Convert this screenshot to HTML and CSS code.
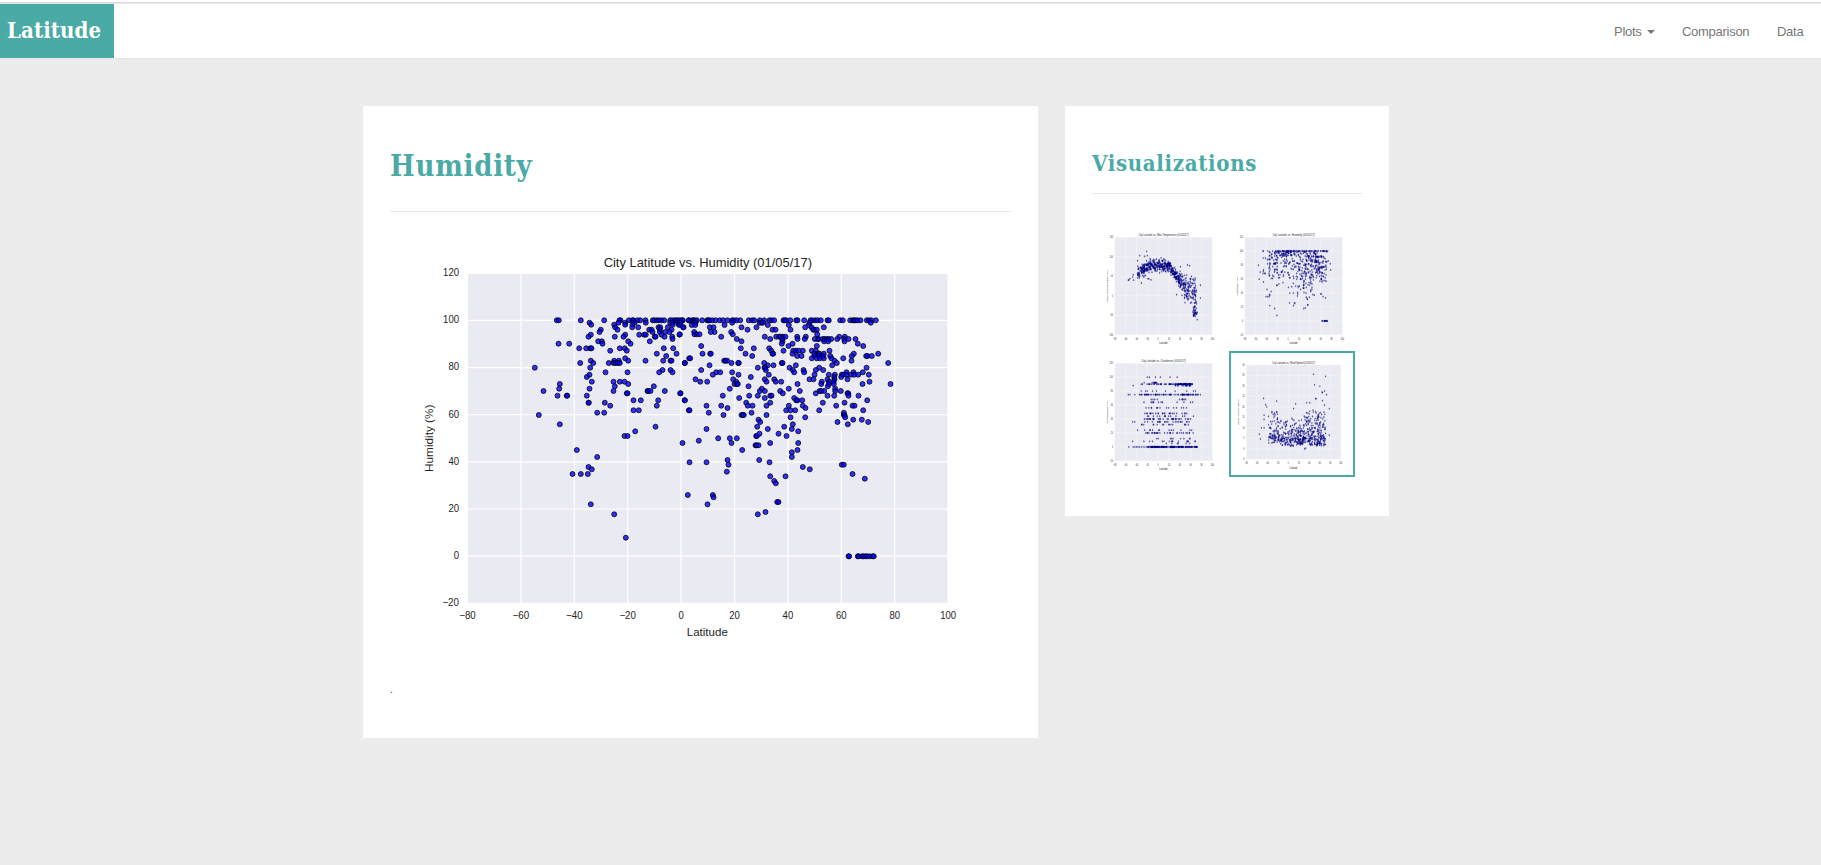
FILE: index.html
```html
<!DOCTYPE html>
<html lang="en">
<head>
<meta charset="utf-8">
<title>Latitude</title>
<link rel="stylesheet" href="styles.css">
</head>
<body>
<header class="navbar">
  <a class="brand">Latitude</a>
  <nav class="nav">
    <a class="plots">Plots <span class="caret"></span></a>
    <a class="comparison">Comparison</a>
    <a class="data">Data</a>
  </nav>
</header>
<main class="layout">
  <section class="panel main-panel">
    <h1>Humidity</h1>
    <hr>
    <svg class="chart" data-plot="humidity" viewBox="0 0 620 413"></svg>
    <p>.</p>
  </section>
  <aside class="panel side-panel">
    <h2>Visualizations</h2>
    <hr>
    <div class="thumbs">
      <svg data-plot="temperature" viewBox="0 0 620 426" preserveAspectRatio="none"></svg>
      <svg data-plot="humidity" viewBox="0 0 620 426" preserveAspectRatio="none"></svg>
      <svg data-plot="cloudiness" viewBox="0 0 620 426" preserveAspectRatio="none"></svg>
      <svg class="active" data-plot="wind" viewBox="0 0 620 426" preserveAspectRatio="none"></svg>
    </div>
  </aside>
</main>
<script src="plots.js"></script>
</body>
</html>
```
FILE: styles.css
```css
* { box-sizing: border-box; }
body { margin: 0; min-height: 865px; background: #ececec; font-family: "Liberation Sans", Arial, sans-serif; }
.navbar { height: 59px; display: flex; justify-content: space-between; background: #fff; border-bottom: 1px solid #e7e7e7; padding-top: 2px; }
.navbar::before { content: ""; position: absolute; left: 0; right: 0; top: 2px; height: 2px; background: linear-gradient(#d9dadc 50%, #e7e7e7 50%); }
.brand { margin-top: 2px; width: 114px; height: 54px; padding: 12px 0 0 7px; background: #4aaaa5; color: #fff; font: bold 22px/28px Georgia, "DejaVu Serif Condensed", "DejaVu Serif", serif; letter-spacing: .1px; }
.nav { display: flex; align-items: flex-start; gap: 27px; padding: 20px 17px 0 0; color: #777; font-size: 13px; line-height: 20px; letter-spacing: -.28px; }
.plots { width: 41px; display: flex; align-items: center; justify-content: space-between; }
.comparison { width: 68px; }
.data { width: 27px; }
.caret { border: solid transparent; border-width: 4px 4px 0; border-top-color: #777; }
.layout { display: flex; align-items: flex-start; gap: 27px; margin: 47px 0 0 363px; }
.panel { background: #fff; padding: 0 27px; }
.main-panel { width: 675px; height: 632px; }
.side-panel { width: 324px; height: 410px; }
h1, h2 { margin: 0; color: #4aaaa5; font-family: Georgia, "DejaVu Serif Condensed", "DejaVu Serif", serif; font-weight: bold; white-space: nowrap; }
h1 { padding-top: 42px; height: 105px; font-size: 29px; line-height: 36px; letter-spacing: .75px; }
h2 { padding-top: 43px; height: 87px; font-size: 22px; line-height: 28px; letter-spacing: .7px; }
hr { height: 1px; margin: 0; border: 0; background: #e8e8e8; }
.chart { display: block; width: 620px; height: 413px; margin: 20px 0 0 .3px; }
p { margin: 38px 0 0; font-size: 10px; line-height: 14px; color: #333; }
.thumbs { display: grid; grid-template-columns: 126px 126px; grid-auto-rows: 126px; column-gap: 4px; padding: 31px 0 0 7px; }
.thumbs svg { width: 126px; height: 126px; }
.thumbs .active { border: 2px solid #4aaaa5; }
svg text { font-family: "Liberation Sans", Arial, sans-serif; fill: #262626; }
.area { fill: #eaeaf2; }
.grid { stroke: #fff; stroke-width: 1.2; fill: none; }
.point { fill: #0000ff; fill-opacity: .8; stroke: #000; stroke-opacity: .75; stroke-width: 1; }
.thumbs .point { fill: #000080; fill-opacity: .6; stroke: #000080; stroke-opacity: .4; stroke-width: 1; }
.tick { font-size: 10.6px; }
.axis { font-size: 11.3px; }
.title { font-size: 12.2px; }
```
FILE: plots.js
```js
const NS = "http://www.w3.org/2000/svg";
const L = 77.5, T = 41.3, W = 480.6, H = 330;

// Humidity samples grouped in four regions; each entry is "y:x x x".
const humidity = [
  [19.5, 8, `241:442 448 514 584 630 633 658 668 672 684 692 708 730 734 742 748 756 764 782 788 796 800 806 812 820 838
248:540 627 647 675 709 782 789 806|254:545 614 647 669 790 808|262:617 668 686 747 752 775 822|269:574 624 719 726 752 786
276:570 729 751 768 780|284:544 647 689 704 709 756 810|290:537 616 642 736 738 765 788|297:789|304:566 577 656 721|311:447 479 579 663
325:509 530 542 546 631 646 763 791|332:602 652|341:742 801|348:770|355:647 839|362:544 614 628 656 708 761 783 786
369:512 551 598 612 618 625 631 826|383:376 542|390:759 783|397:588 654 749 789|404:540|411:532|425:547 612 631 645
432:451 656|439:616 733|446:449 540|453:402 612 714 716 723 766|460:652 654 812|467:444 472 473 532|481:672 694 746 826
488:537 538 586|497:602 742|511:672 688 838|518:563 584|525:388|553:451|560:738|574:677|588:645 654`],
  [289.5, 8, `241:8 28 38 42 46 52 68 83 86 90 98 108 121 131 144 158 163 171 182 208 218 224 241 254 270 276 284 312 316 320 332 350 354 374 393 398 407 414 424 444 448 482 490 512 520 524 529 535 543 562 568 575 589
248:3 43 48 158 240 246 250 390 574|255:2 37 47 135 265 328 388|262:11 91 102 186 231 377 396 433|269:204 279 288 333 401 404 412
276:44 94 105 155|283:1 45 52 60 160 413|290:125 256 290 299 303 310 318 353 379 479 496
297:172 272 308 354 376 406 415 418 430 435 442 447 455 473 494 507 528|304:186 309 434 446 495|311:307 339 535
318:65 327 412 551|325:184 223 269|332:275 312 341 349 358 370 397 409 450|341:69 92 94 198 279 281 339 404 416 420 433 523 596
348:218 353 366 405 419 431 452 517 560 564 577|355:32 397 412 421 433 456 491|362:134 138 143 465 516|369:16 156 176 178 254 307 309 472 626
376:90 265 282 349 458|383:235 255 257 330 419 561|390:65 259 340 372 409 431|397:110 122 158 344 374 501 522 550
404:100 177 268 405 448 466 487 491 502 515 524 536 568|411:214 464 485|418:48 161 256 284 390 402 444 465 504
425:62 83 170 261 289 305 427 449 462 570|432:165 172 175 354 425 448 463 549 633|439:207 445|446:151 247 328 467
453:241 256 302 361 420 425 434 467 484|460:3 310 409 504 506|467:130 209 235 272 276 444 464 507 537|474:179 256 344
481:16 350 354 368 563|488:200 272 430 495|497:81 125 205 219 261 328 370 470 519 525|504:144 378|511:30 320 333 347 419 551
518:88 216 493|525:132 186 190 193 261 493 495|532:333 377 497|539:237 521 547|546:242 474 566|553:340 505
560:233 314|567:81 265 337|574:356|581:240 297|588:230 232 321|595:116 151 172`],
  [19.5, 198, `60:502|81:563|111:537|118:547|132:489 514 535|223:544|253:614|323:649|39:819`],
  [289.5, 198, `32:58|39:156 272 356|46:228 231 237
60:188 354|67:337|81:337|90:144 239|97:30 81 270|104:147 487 493|125:142|111:370|118:391|132:519|139:272 318|146:556|153:284
160:289|195:25 100|202:102|223:84|216:293 297|246:258|253:235|379:507 509 535 538 548 552 558 563 571 580 583`]
];

const plots = {
  humidity: { title: "City Latitude vs. Humidity (01/05/17)", label: "Humidity (%)", min: -20, max: 120, step: 20 },
  temperature: { title: "City Latitude vs. Max Temperature (01/05/17)", label: "Max Temperature (F)", min: -100, max: 150, step: 50 },
  cloudiness: { title: "City Latitude vs. Cloudiness (01/05/17)", label: "Cloudiness (%)", min: -20, max: 120, step: 20 },
  wind: { title: "City Latitude vs. Wind Speed (01/05/17)", label: "Wind Speed (mph)", min: -5, max: 40, step: 5 }
};

function add(svg, tag, attrs, text) {
  const el = document.createElementNS(NS, tag);
  for (const k in attrs) el.setAttribute(k, attrs[k]);
  if (text) el.textContent = text;
  svg.appendChild(el);
}
function generator(seed) {
  return () => (seed = (seed * 16807) % 2147483647) / 2147483647;
}
function humidityPoints() {
  const out = [];
  for (const [ox, oy, rows] of humidity)
    for (const row of rows.split(/[|\n]/)) {
      const [y, xs] = row.split(":");
      for (const x of xs.trim().split(" ")) out.push([ox + x / 3, oy + y / 3]);
    }
  return out;
}
function samplePoints(name, p) {
  const r = generator(name.length * 7919), out = [];
  const norm = () => r() + r() + r() - 1.5;
  const put = (x, y) => out.push([L + (x + 80) / 180 * W, T + (p.max - y) / (p.max - p.min) * H]);
  const lat = () => { const v = r(); return v < .08 ? -38 + r() * 13 : v < .42 ? -27 + r() * 42 : 15 + r() * 56; };
  if (name === "temperature") {
    for (let i = 0; i < 570; i++) {
      const x = lat();
      const y = x < -20 ? 74 + (x + 20) * .8 : x < 18 ? 78 : x < 50 ? 78 - (x - 18) * 1.75 : 22 - (x - 50) * .9;
      put(x, y + norm() * (x > 40 ? 36 : 15));
    }
    for (let i = 0; i < 30; i++) put(64 + r() * 8, -25 - r() * 28);
    [[-55,40],[-54,41],[-52,44],[-46,54],[-47,48],[-45,40],[-38,90],[-34,103],[-25,101],[-21,114],[-20,103],[-31,33],[-19,44],[-17,43],[-13,41],[-15,95],[54,79],[58,77],[78,27],[78,-6],[72,-61],[34,3]].forEach(q => put(...q));
  } else if (name === "cloudiness") {
    [[0,145,-20,72],[90,60,30,66],[88,16,30,60],[90,28,-32,30],[92,10,-30,5],[75,72,-35,74],[40,32,-28,62],[36,22,-35,60],[48,24,-28,65],[20,30,-28,68],[24,12,-28,65],[56,15,-26,62],[64,12,-35,66],[68,10,-27,62],[80,10,-35,70],[44,14,-20,66],[32,16,-32,60],[8,16,-35,70],[12,9,-15,68],[5,6,15,70]].forEach(([y, n, a, b]) => {
      for (let i = 0; i < n; i++) put(a + r() * (b - a), y);
    });
    [[-54,0],[-46,0],[-43,0],[-40,0],[-37,0],[-34,0],[-30,0],[-26,0],[-22,0],[-55,75],[-52,75],[-46,88],[-43,75],[78,75],[-20,100],[-16,100],[-5,100],[4,100],[22,100],[35,100],[-47,36],[-43,36],[-38,24],[-47,8]].forEach(q => put(...q));
  } else {
    for (let i = 0; i < 500; i++) {
      const x = lat();
      put(x, (x < -15 ? 2.5 : 1.3) + r() * 3.6 + Math.pow(r(), 2.8) * (x > 30 || x < -20 ? 14 : 10));
    }
    for (let i = 0; i < 50; i++) put(30 + r() * 41, 8 + r() * 10);
    for (let i = 0; i < 22; i++) put(-38 + r() * 20, 5 + r() * 13);
    [[-55,7],[-53,4.7],[-51,10],[-47,24],[-46,16],[-46,14],[-46,10],[-43,21],[-41,20],[-22,22.7],[14,21.4],[35,22],[41,22],[48,35.5],[50,30.5],[60,29.8],[71,34.5],[64,27],[65,26.8],[69,27.5],[52,24],[53,23.8],[65,23],[73,25.8],[69,20.8],[78,19.2],[78,6.5],[10,19.2],[31,0],[33,.3]].forEach(q => put(...q));
  }
  return out;
}
document.querySelectorAll("svg[data-plot]").forEach(svg => {
  const name = svg.dataset.plot, p = plots[name], thumb = !svg.classList.contains("chart");
  add(svg, "rect", { class: "area", x: L, y: T, width: W, height: H });
  const tick = (v, x, y, anchor) => {
    const s = String(v).replace("-", "−");
    const n = s.replace("−", "").length;
    add(svg, "text", { class: "tick", x, y, "text-anchor": anchor, textLength: n * 5.3 + (v < 0 ? 6 : 0), lengthAdjust: "spacingAndGlyphs" }, s);
  };
  for (let v = -80; v <= 100; v += 20) {
    const x = L + (v + 80) / 180 * W;
    add(svg, "path", { class: "grid", d: `M${x} ${T}V${T + H}` });
    tick(v, x, 387.3, "middle");
  }
  for (let v = p.min; v <= p.max; v += p.step) {
    const y = T + (p.max - v) / (p.max - p.min) * H;
    add(svg, "path", { class: "grid", d: `M${L} ${y}H${L + W}` });
    tick(v, 69, y + 2.8, "end");
  }
  const points = name === "humidity" ? humidityPoints() : samplePoints(name, p);
  for (const [x, y] of points) add(svg, "circle", { class: "point", cx: x.toFixed(1), cy: y.toFixed(1), r: thumb ? 3 : 2.5 });
  add(svg, "text", { class: "title", x: L + W / 2, y: thumb ? 37 : 35.3, "text-anchor": "middle", textLength: p.title.length * 5.63, lengthAdjust: "spacingAndGlyphs" }, p.title);
  add(svg, "text", { class: "axis", x: L + W / 2 - .5, y: 403.7, "text-anchor": "middle", textLength: 41, lengthAdjust: "spacingAndGlyphs" }, "Latitude");
  add(svg, "text", { class: "axis", transform: `translate(43 ${T + H / 2}) rotate(-90)`, "text-anchor": "middle", textLength: p.label.length * 5.6, lengthAdjust: "spacingAndGlyphs" }, p.label);
});
```
